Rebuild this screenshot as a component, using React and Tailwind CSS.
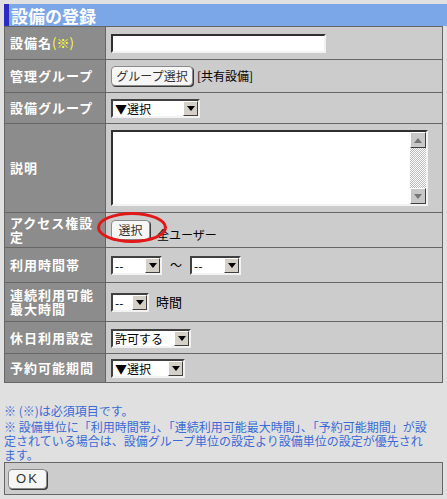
import clsx from "clsx";

const font = "font-['Noto_Sans_CJK_JP',sans-serif]";

const Arrow = () => (
  <svg width="8" height="5" viewBox="0 0 8 5">
    <polygon points="0,0 8,0 4,5" fill="#000" />
  </svg>
);

const Select = ({ w, children }) => (
  <span
    className={clsx(
      "inline-flex h-[19px] items-stretch bg-white border-2 border-t-[#404040] border-l-[#404040] border-r-[#f2f2f2] border-b-[#f2f2f2] align-middle",
      w
    )}
  >
    <span className="flex flex-1 items-center pl-[2px] text-[12px] leading-[15px] text-black whitespace-nowrap">
      {children}
    </span>
    <span className="flex w-[15px] items-center justify-center bg-[#d4d0c8] border border-t-white border-l-white border-r-[#404040] border-b-[#404040]">
      <Arrow />
    </span>
  </span>
);

const Btn = ({ w, children, className }) => (
  <span
    className={clsx(
      "inline-flex h-[20px] items-center justify-center rounded-[4px] border border-[#8a8a8a] bg-[#f6f6f6] text-[12px] leading-none text-[#333] shadow-[1px_1px_0_#3a3a3a] align-middle",
      w,
      className
    )}
  >
    {children}
  </span>
);

const Label = ({ children, h }) => (
  <td className={clsx("w-[101px] border border-[#666] bg-[#8c8c8c] pl-[5px] pr-0 text-[13px] font-bold leading-[14px] tracking-[1px] text-white whitespace-nowrap", h)}>
    {children}
  </td>
);

const Cell = ({ children }) => (
  <td className="border border-[#666] bg-[#cccccc] pl-[5px] text-[12px] text-black">{children}</td>
);

export default function App() {
  return (
    <div className={clsx("min-h-[499px] bg-[#e0e0e0] pt-1 pl-1", font)}>
      {/* title */}
      <div className="flex h-[22px] items-center border-l-[5px] border-[#2b2bc4] bg-[#7ba6e8] pl-[2px] text-[17px] font-bold leading-none text-white">
        設備の登録
      </div>

      <table className="w-[439px] border-collapse">
        <tbody>
          <tr>
            <Label h="h-[33px]">
              設備名<span className="font-normal tracking-normal text-[#ffff33]">(※)</span>
            </Label>
            <Cell>
              <span className="block h-[19px] w-[215px] bg-white border-2 border-t-[#303030] border-l-[#303030] border-r-[#f2f2f2] border-b-[#f2f2f2]" />
            </Cell>
          </tr>
          <tr>
            <Label h="h-[33px]">管理グループ</Label>
            <Cell>
              <div className="flex items-center gap-[4px]">
                <Btn w="w-[82px]">グループ選択</Btn>
                <span>[共有設備]</span>
              </div>
            </Cell>
          </tr>
          <tr>
            <Label h="h-[31px]">設備グループ</Label>
            <Cell>
              <Select w="w-[89px]">▼選択</Select>
            </Cell>
          </tr>
          <tr>
            <Label h="h-[89px]">説明</Label>
            <Cell>
              <div className="flex h-[76px] w-[317px] bg-white border-2 border-t-[#303030] border-l-[#303030] border-r-[#f2f2f2] border-b-[#f2f2f2]">
                <div className="flex-1" />
                <div className="flex w-[16px] flex-col">
                  <span className="flex h-[16px] items-center justify-center bg-[#c8c8c8] border border-t-white border-l-white border-r-[#404040] border-b-[#404040]">
                    <svg width="8" height="5" viewBox="0 0 8 5">
                      <polygon points="4,0 8,5 0,5" fill="#777" />
                    </svg>
                  </span>
                  <span className="flex-1 bg-[image:repeating-conic-gradient(#bdbdbd_0_25%,#ffffff_0_50%)] bg-[length:2px_2px]" />
                  <span className="flex h-[16px] items-center justify-center bg-[#c8c8c8] border border-t-white border-l-white border-r-[#404040] border-b-[#404040]">
                    <svg width="8" height="5" viewBox="0 0 8 5">
                      <polygon points="0,0 8,0 4,5" fill="#777" />
                    </svg>
                  </span>
                </div>
              </div>
            </Cell>
          </tr>
          <tr>
            <Label h="h-[35px]">
              アクセス権設
              <br />
              定
            </Label>
            <Cell>
              <div className="relative flex items-end gap-[7px]">
                <Btn w="w-[39px]">選択</Btn>
                <span className="translate-y-[4px]">全ユーザー</span>
                <span className="pointer-events-none absolute left-[-14px] top-[-8px] h-[31px] w-[70px] rounded-[50%] border-[3px] border-[#e01818]" />
              </div>
            </Cell>
          </tr>
          <tr>
            <Label h="h-[35px]">利用時間帯</Label>
            <Cell>
              <div className="flex items-center">
                <Select w="w-[51px]">--</Select>
                <span className="mx-[6px] w-[16px] text-center">〜</span>
                <Select w="w-[51px]">--</Select>
              </div>
            </Cell>
          </tr>
          <tr>
            <Label h="h-[39px]">
              連続利用可能
              <br />
              最大時間
            </Label>
            <Cell>
              <div className="flex items-center gap-[7px]">
                <Select w="w-[38px]">--</Select>
                <span className="text-[13px]">時間</span>
              </div>
            </Cell>
          </tr>
          <tr>
            <Label h="h-[32px]">休日利用設定</Label>
            <Cell>
              <Select w="w-[80px]">許可する</Select>
            </Cell>
          </tr>
          <tr>
            <Label h="h-[29px]">予約可能期間</Label>
            <Cell>
              <Select w="w-[74px]">▼選択</Select>
            </Cell>
          </tr>
        </tbody>
      </table>

      {/* notes */}
      <div className="mt-[21px] w-[440px] text-[12px] leading-[14px] text-[#3a6bd6]">
        <p className="mb-[2px] whitespace-nowrap">※ (※)は必須項目です。</p>
        <p className="whitespace-nowrap">※ 設備単位に「利用時間帯」、「連続利用可能最大時間」、「予約可能期間」が設</p>
        <p className="whitespace-nowrap">定されている場合は、設備グループ単位の設定より設備単位の設定が優先され</p>
        <p className="whitespace-nowrap">ます。</p>
      </div>

      <div className="flex h-[33px] w-[439px] items-center border border-[#666] bg-[#cccccc] pl-[3px]">
        <Btn w="w-[39px]" className="font-['Liberation_Sans',sans-serif] tracking-[2px] text-[13px]">
          OK
        </Btn>
      </div>
    </div>
  );
}
